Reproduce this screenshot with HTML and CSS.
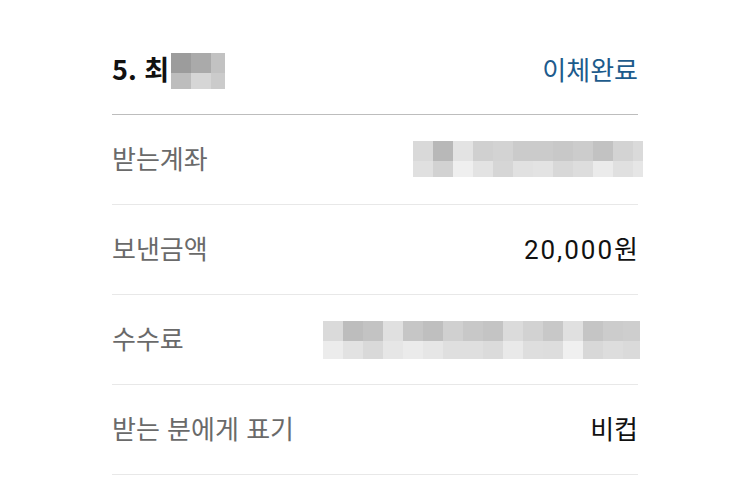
FILE: index.html
```html
<!DOCTYPE html>
<html lang="ko">
<head>
  <meta charset="UTF-8">
  <title>이체내역</title>
  <link rel="stylesheet" href="styles.css">
</head>
<body>

<div class="transfer">
  <div class="transfer-head">
    <div class="name">
      <span>5. 최</span>
      <span class="mosaic mosaic-name"></span>
    </div>
    <div class="status">이체완료</div>
  </div>

  <div class="row">
    <div class="label">받는계좌</div>
    <div class="mosaic mosaic-account"></div>
  </div>

  <div class="row">
    <div class="label">보낸금액</div>
    <div class="value amount">20,000원</div>
  </div>

  <div class="row">
    <div class="label">수수료</div>
    <div class="mosaic mosaic-fee"></div>
  </div>

  <div class="row">
    <div class="label">받는 분에게 표기</div>
    <div class="value">비컵</div>
  </div>
</div>

</body>
</html>
```

FILE: styles.css
```css
body {
  margin: 0;
  background-color: #fff;
  font-family: "Noto Sans CJK KR", "Noto Sans", sans-serif;
}
.transfer {
  width: 526px;
  margin: 26px 0 0 112px;
}
.transfer-head {
  height: 84px;
  padding-bottom: 4px;
  display: flex;
  align-items: center;
  justify-content: space-between;
  border-bottom: 1px solid #bdbdbd;
}
.name {
  display: flex;
  align-items: center;
  font-size: 27px;
  font-weight: bold;
  color: #111;
}
.status {
  font-size: 26px;
  color: #1d5b8c;
}
.row {
  height: 85px;
  padding-bottom: 4px;
  display: flex;
  align-items: center;
  justify-content: space-between;
  border-bottom: 1px solid #e8e8e8;
}
.label {
  font-size: 26px;
  color: #6a6a6a;
}
.value {
  font-family: Roboto, "Noto Sans CJK KR", sans-serif;
  font-size: 26px;
  color: #111;
}
.amount {
  letter-spacing: 2px;
  margin-right: -2px;
}

/* blurred parts, drawn as blocks */
.mosaic {
  display: block;
}
.mosaic-name {
  width: 54px;
  height: 36px;
  margin: 6px 0 0 2px;
  background:
    linear-gradient(to right, #9c9c9c 0 20px, #aaa 20px 40px, #c2c2c2 40px) top / 100% 20px no-repeat,
    linear-gradient(to right, #bdbdbd 0 20px, #d6d6d6 20px 40px, #cbcbcb 40px) bottom / 100% 16px no-repeat;
}
.mosaic-account {
  width: 230px;
  height: 36px;
  margin: 2px -5px 0 0;
  background:
    linear-gradient(to right, #d9d9d9 0 20px, #b8b8b8 20px 40px, #e3e3e3 40px 60px, #d0d0d0 60px 80px,
      #d3d3d3 80px 100px, #cbcbcb 100px 140px, #c8c8c8 140px 160px, #ccc 160px 180px,
      #c2c2c2 180px 200px, #d3d3d3 200px 220px, #dadada 220px) top / 100% 20px no-repeat,
    linear-gradient(to right, #e0e0e0 0 20px, #d2d2d2 20px 40px, #efefef 40px 60px, #e3e3e3 60px 80px,
      #d6d6d6 80px 100px, #e1e1e1 100px 120px, #e3e3e3 120px 140px, #d8d8d8 140px 160px,
      #ddd 160px 180px, #ebebeb 180px 200px, #e0e0e0 200px 220px, #e6e6e6 220px) bottom / 100% 16px no-repeat;
}
.mosaic-fee {
  width: 317px;
  height: 38px;
  margin: 4px -2px 0 0;
  background:
    linear-gradient(to right, #dadada 0 20px, #bdbdbd 20px 40px, #c3c3c3 40px 60px, #e0e0e0 60px 80px,
      #c6c6c6 80px 100px, #bfbfbf 100px 120px, #d0d0d0 120px 140px, #c8c8c8 140px 160px,
      #c4c4c4 160px 180px, #dbdbdb 180px 200px, #d2d2d2 200px 220px, #c8c8c8 220px 240px,
      #e0e0e0 240px 260px, #c5c5c5 260px 280px, #ccc 280px 300px, #cecece 300px) top / 100% 20px no-repeat,
    linear-gradient(to right, #ececec 0 20px, #e2e2e2 20px 40px, #d9d9d9 40px 60px, #e6e6e6 60px 80px,
      #ebebeb 80px 100px, #e6e6e6 100px 120px, #dfdfdf 120px 160px, #dbdbdb 160px 180px,
      #e9e9e9 180px 200px, #dedede 200px 220px, #ddd 220px 240px, #f0f0f0 240px 260px,
      #d8d8d8 260px 280px, #ddd 280px 300px, #dadada 300px) bottom / 100% 18px no-repeat;
}
```
